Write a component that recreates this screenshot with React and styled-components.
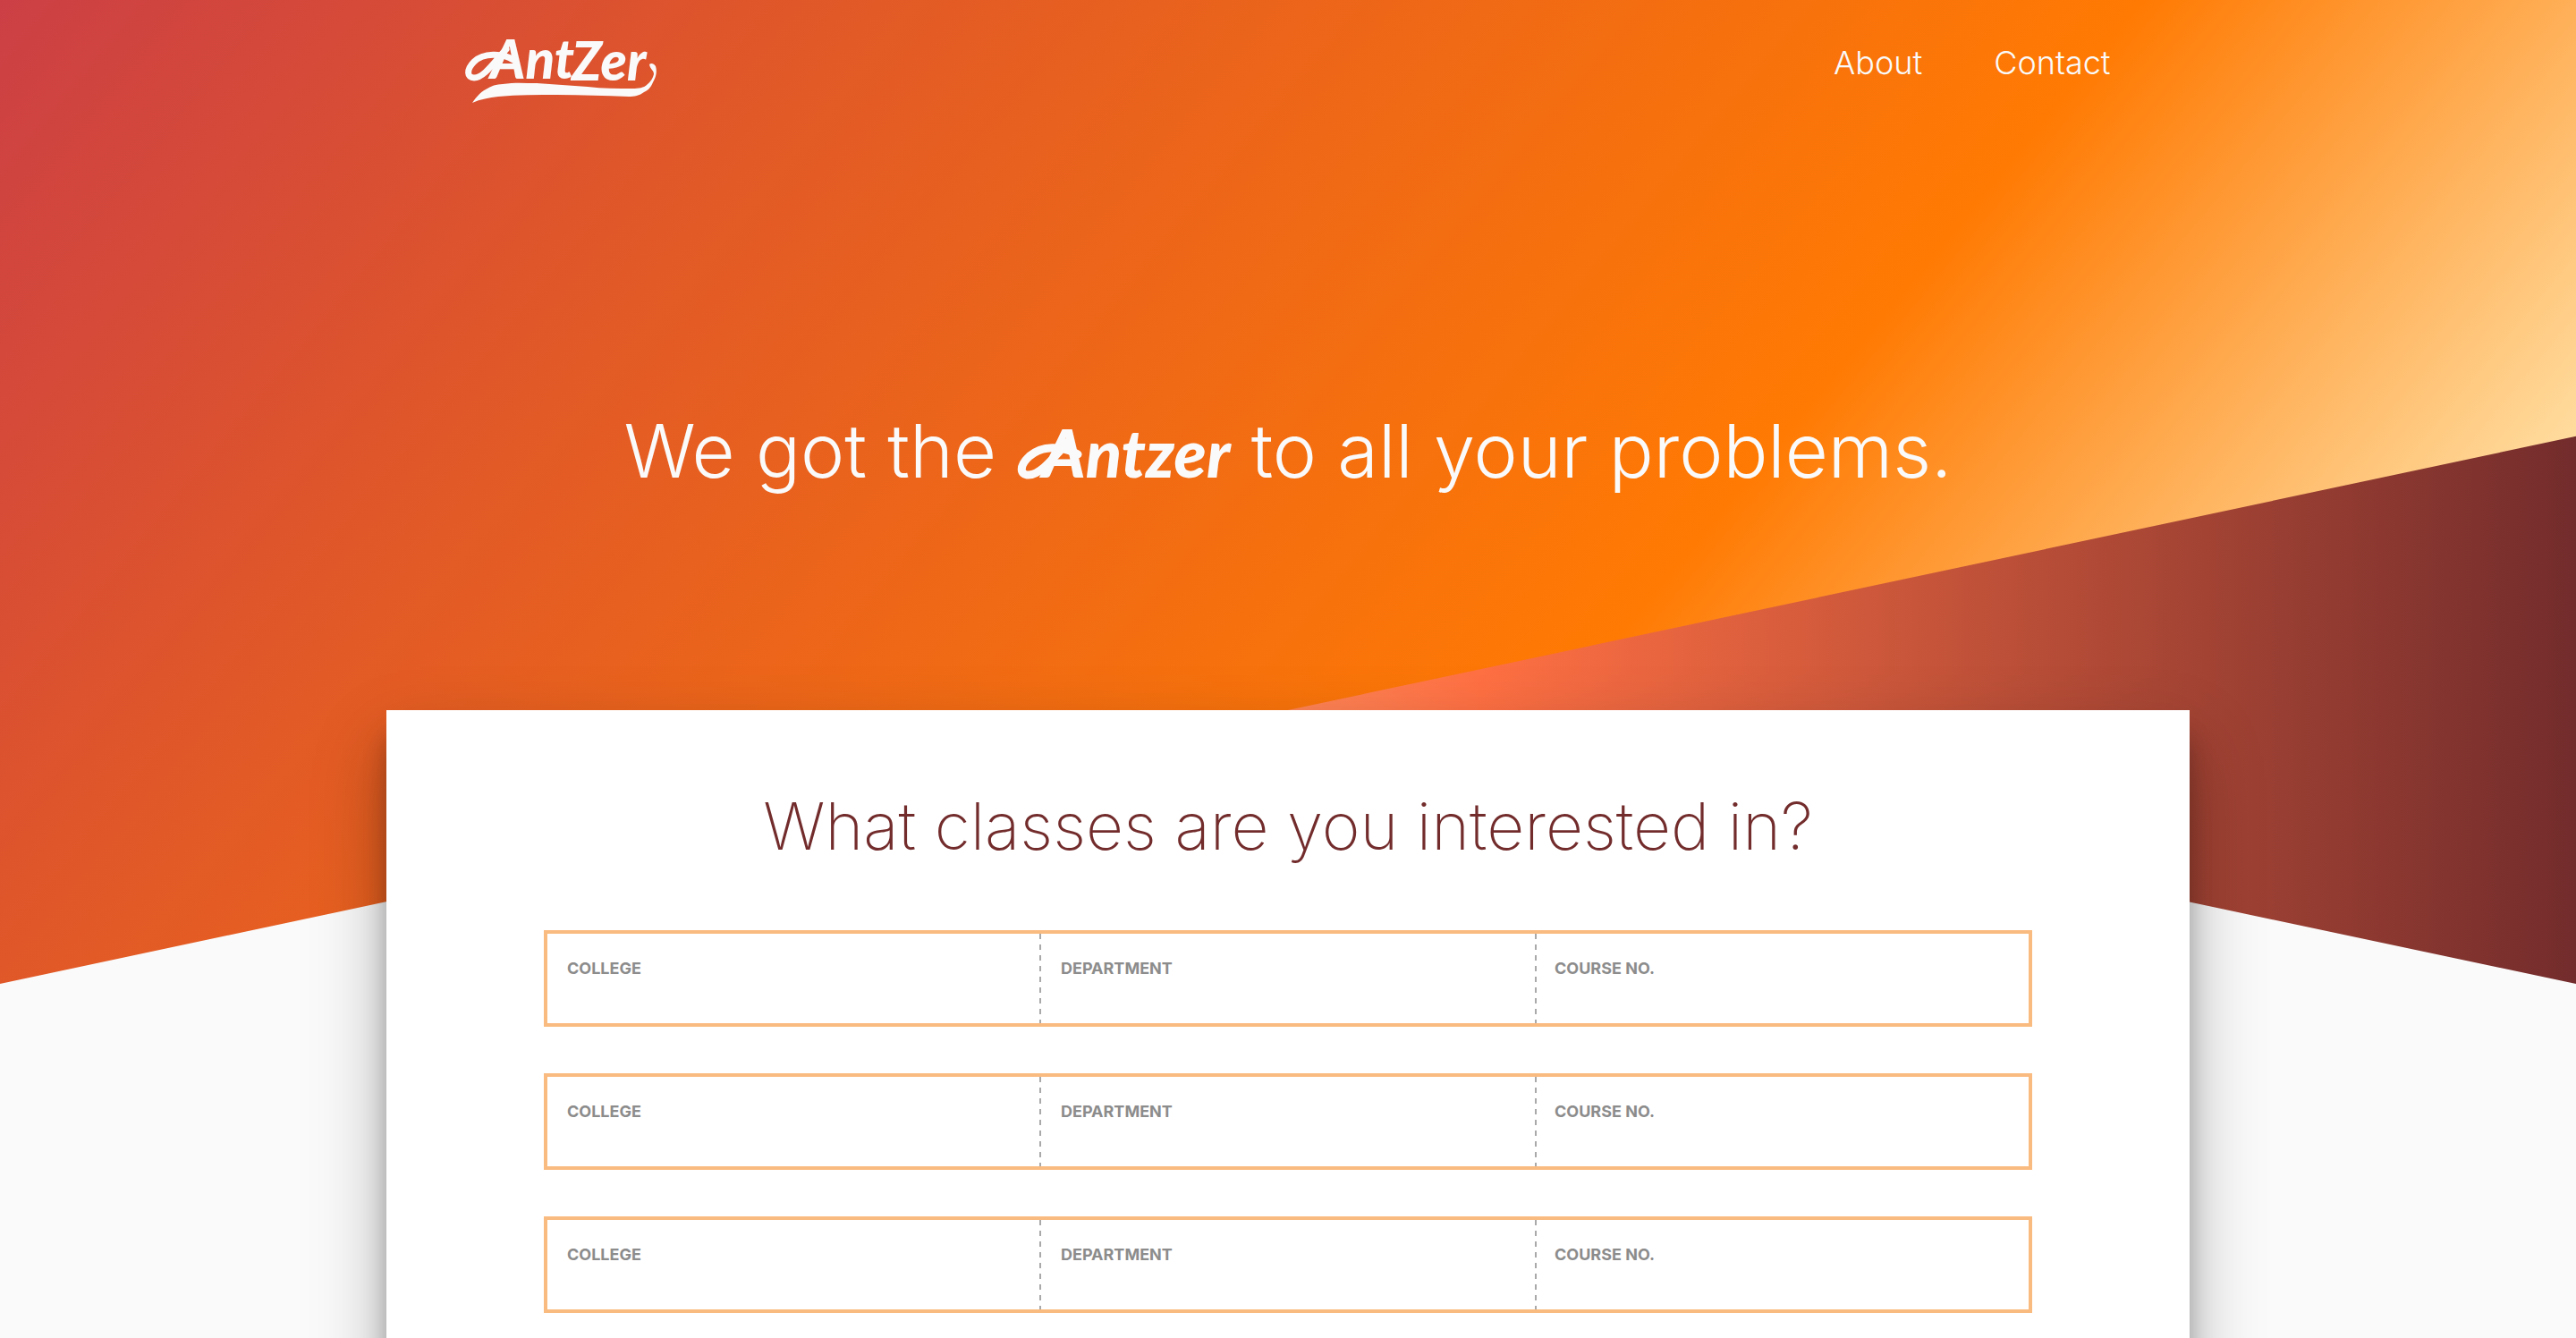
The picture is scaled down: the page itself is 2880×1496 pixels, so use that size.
import React from "react";
import styled, { createGlobalStyle } from "styled-components";

const GlobalStyle = createGlobalStyle`
  *, *::before, *::after { box-sizing: border-box; }
  body {
    margin: 0;
    background: #fafafa;
    font-family: Inter, "Open Sans", sans-serif;
    overflow-x: hidden;
  }
`;

const Page = styled.div`
  position: relative;
  overflow: hidden;
`;

const Backdrop = styled.div`
  position: absolute;
  inset: 0 0 auto;
  height: 1100px;
  transform: skewY(-12deg);
  transform-origin: 0 0;
  background: linear-gradient(135deg, #cc3f45 0%, #e25a26 30%, #ff7a03 73%, #ffdc9e 100%);
`;

const Wedge = styled.div`
  position: absolute;
  top: 447px;
  left: 50%;
  right: 0;
  height: 653px;
  clip-path: polygon(0 348px, 0 306px, 100% 0, 100% 100%);
  background: linear-gradient(to right, #ff8557 0%, #ff7043 15%, #732c2c 100%);
`;

const Header = styled.header`
  position: relative;
  display: flex;
  justify-content: space-between;
  align-items: flex-start;
  width: 64%;
  margin: 0 auto;
  padding-top: 40px;
`;

const HomeLink = styled.a`
  display: block;
  color: #fafafa;
`;

const LogoDrawing = styled.svg`
  display: block;
  overflow: visible;
`;

const WordmarkDrawing = styled.svg`
  overflow: visible;
`;

const ScriptText = styled.text`
  font-family: Lato, sans-serif;
  font-weight: 900;
  font-style: italic;
  font-size: ${(p) => p.$size}px;
  fill: currentColor;
`;

const Nav = styled.nav`
  display: flex;
  gap: 80px;
  padding: 8px 2px 0 0;
`;

const NavLink = styled.a`
  color: #fafafa;
  font-size: 36px;
  font-weight: 300;
  line-height: 44px;
  text-decoration: none;
`;

const Tagline = styled.h1`
  position: relative;
  margin: 0;
  padding: 336px 0 238px;
  color: #fafafa;
  font-size: 83px;
  font-weight: 300;
  line-height: 104px;
  text-align: center;
`;

const Card = styled.main`
  position: relative;
  width: 70%;
  margin: 0 auto;
  padding: 82px 176px 120px;
  background: #fff;
  box-shadow: 0 38px 76px rgba(0, 0, 0, 0.3), 0 30px 24px rgba(0, 0, 0, 0.22);
`;

const Question = styled.h2`
  margin: 0 0 68px;
  color: #732c2c;
  font-size: 73px;
  font-weight: 200;
  line-height: 96px;
  text-align: center;
`;

const CourseList = styled.form`
  display: grid;
  gap: 52px;
`;

const CourseRow = styled.div`
  display: grid;
  grid-template-columns: repeat(3, 1fr);
  height: 108px;
  border: 4px solid #fabb80;
`;

const Field = styled.label`
  display: flex;
  flex-direction: column;
  padding: 24px 22px 0;
  color: #8c8c8c;
  font-size: 18px;
  font-weight: 700;
  line-height: 30px;
  text-transform: uppercase;
  background: ${(p) =>
    p.$divider
      ? `repeating-linear-gradient(#a9a9a9 0 6px, transparent 6px 12px) ${p.$divider} top / 2px 100% no-repeat`
      : "none"};
`;

const FieldInput = styled.input`
  width: 100%;
  height: 40px;
  padding: 0;
  border: 0;
  outline: 0;
  background: transparent;
  color: #732c2c;
  font: 300 28px Inter, "Open Sans", sans-serif;
`;

const Logo = () => (
  <LogoDrawing width="216" height="76" viewBox="0 0 216 76" aria-label="Ant Zer">
    <path
      d="M56 27C44 19 22 19 12 29C3 38 4 47 12 47C23 47 34 30 48 15"
      fill="none"
      stroke="currentColor"
      strokeWidth="7"
      strokeLinecap="round"
    />
    <ScriptText $size={60} x="30" y="48">Ant</ScriptText>
    <ScriptText $size={60} x="121" y="50">Zer</ScriptText>
    <path
      d="M10 75C14 69 19 63 25 60C31 56 37 54 44 54C57 52 69 53 82 53L139 57C156 59 172 59 189 59C196 59 202 58 205 55C210 51 212 47 213 43C213 38 209 38 208 32C210 30 213 31 215 34C217 41 215 47 212 52C209 59 206 61 202 63C197 67 191 68 185 68C158 67 132 66 105 66C83 66 61 66 39 68C29 69 19 71 10 75Z"
      fill="currentColor"
    />
  </LogoDrawing>
);

const Wordmark = () => (
  <WordmarkDrawing width="238" height="60" viewBox="0 0 238 60">
    <path
      d="M68 34C50 24 28 24 14 36C2 47 3 57 13 57C27 57 42 36 58 19"
      fill="none"
      stroke="currentColor"
      strokeWidth="9"
      strokeLinecap="round"
    />
    <ScriptText $size={74} x="28" y="60">Antzer</ScriptText>
  </WordmarkDrawing>
);

const FIELDS = [
  { name: "College", divider: "right" },
  { name: "Department" },
  { name: "Course No.", divider: "left" },
];
const ROWS = [1, 2, 3];

export default function App() {
  return (
    <Page>
      <GlobalStyle />
      <Wedge />
      <Backdrop />
      <Header>
        <HomeLink href="#home"><Logo /></HomeLink>
        <Nav>
          <NavLink href="#about">About</NavLink>
          <NavLink href="#contact">Contact</NavLink>
        </Nav>
      </Header>
      <Tagline>We got the <Wordmark /> to all your problems.</Tagline>
      <Card>
        <Question>What classes are you interested in?</Question>
        <CourseList>
          {ROWS.map((row) => (
            <CourseRow key={row}>
              {FIELDS.map(({ name, divider }) => (
                <Field key={name} $divider={divider}>
                  {name}
                  <FieldInput type="text" name={`${name}-${row}`} />
                </Field>
              ))}
            </CourseRow>
          ))}
        </CourseList>
      </Card>
    </Page>
  );
}
